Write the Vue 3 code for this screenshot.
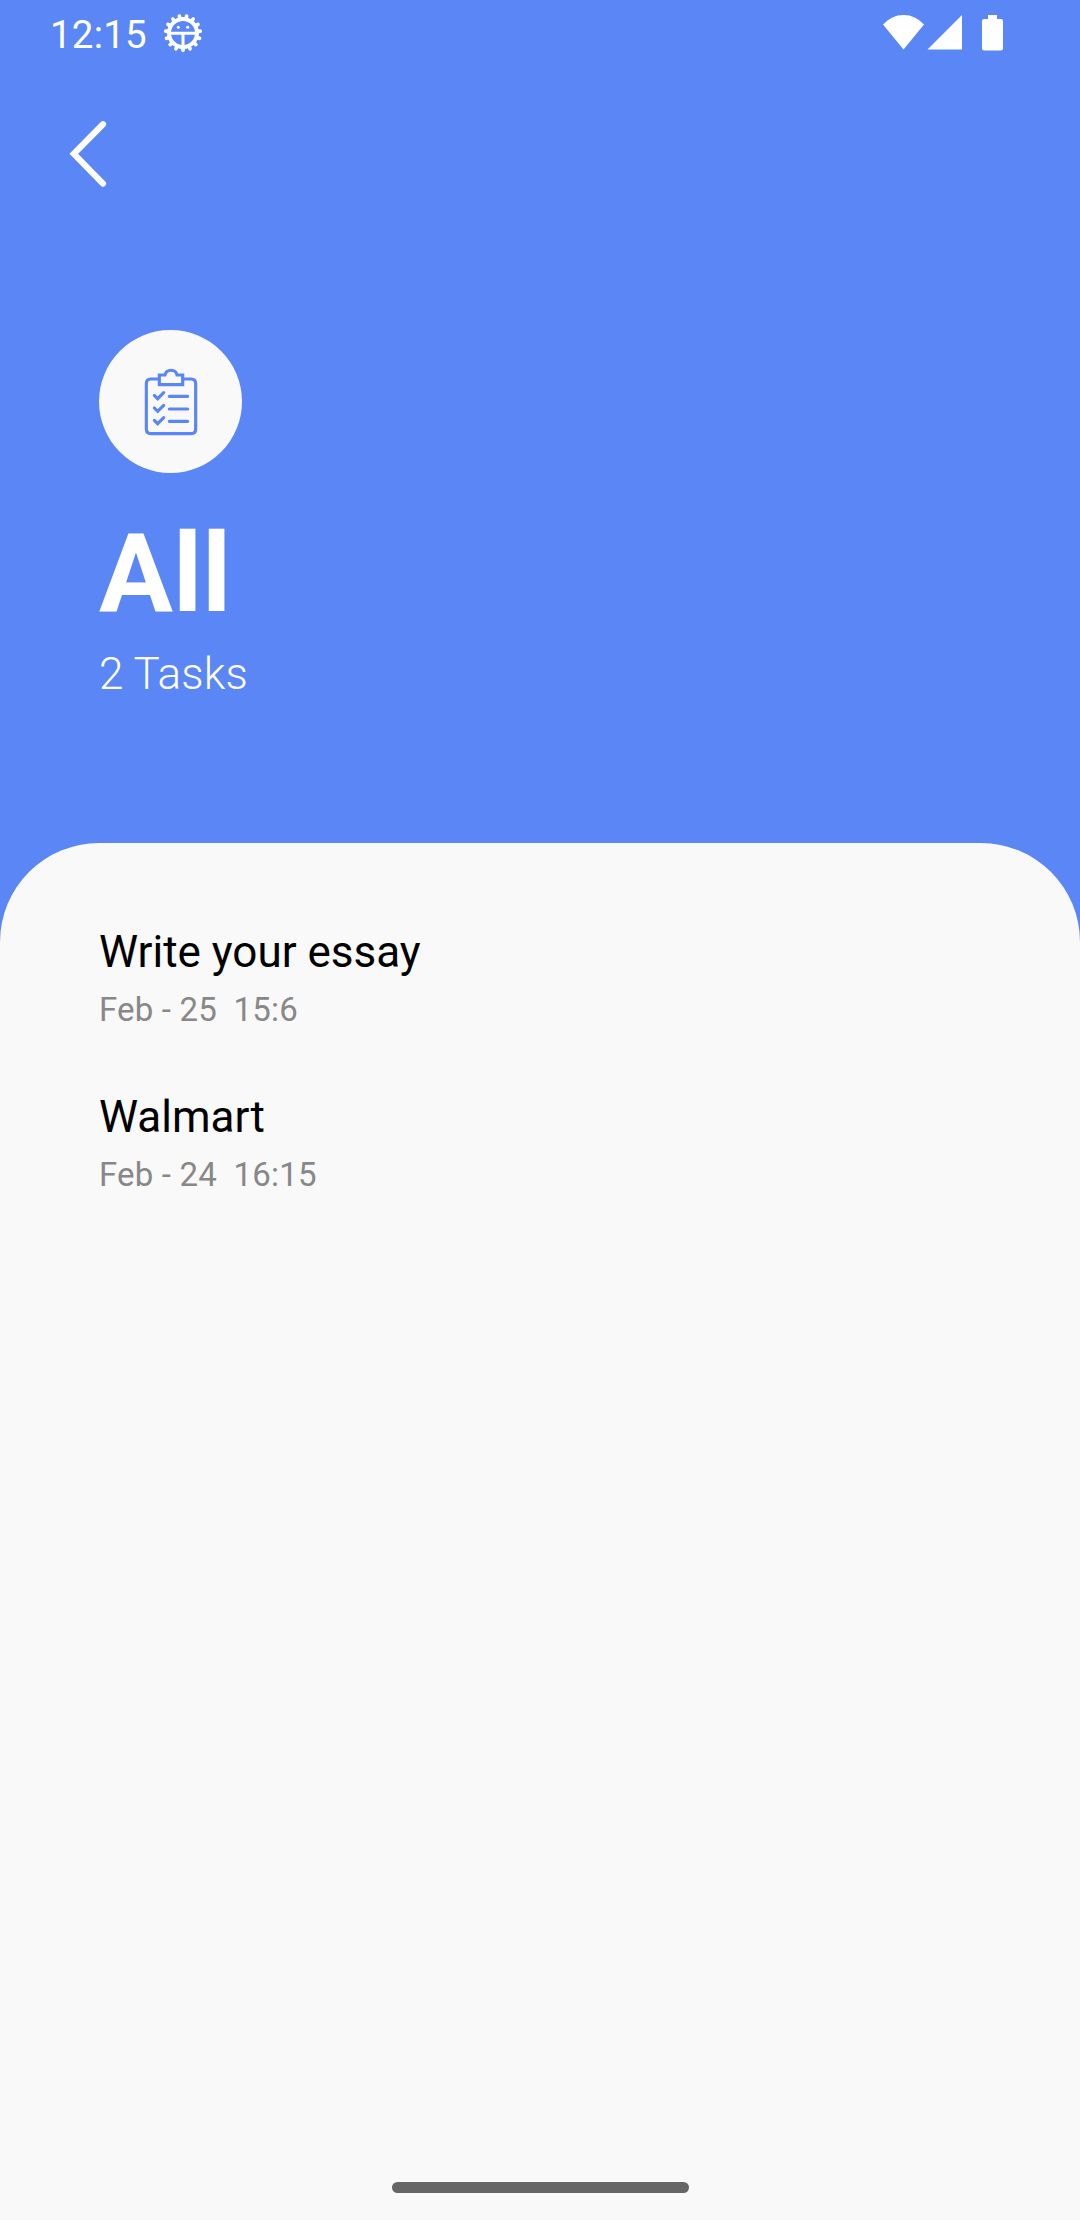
<script setup>
const tasks = [
  { title: 'Write your essay', due: 'Feb - 25  15:6' },
  { title: 'Walmart', due: 'Feb - 24  16:15' },
]

const teeth = Array.from({ length: 15 }, (_, i) => i * 24)
</script>

<template>
  <div class="screen">
    <div class="status">
      <span class="clock">12:15</span>
      <svg class="debug" viewBox="-60 -60 120 120" fill="none" stroke="#fff">
        <path
          v-for="angle in teeth"
          :key="angle"
          d="M0 44V52"
          stroke-width="11"
          stroke-linecap="round"
          :transform="`rotate(${angle})`"
        />
        <circle r="42" stroke-width="12" />
        <path d="M-38 1H38M0 1V40" stroke-width="9" />
        <g fill="#fff" stroke="none">
          <circle cx="-14" cy="-17" r="4.500" />
          <circle cx="14" cy="-17" r="4.500" />
        </g>
      </svg>
      <svg class="signals" viewBox="0 0 120 36" fill="#fff">
        <path d="M0 9.5Q8.500 0 20.500 0T41 9.500L20.500 34.500Z" />
        <path d="M44.500 34.500H79V0Z" />
        <path d="M105 0h9v4h4a2 2 0 0 1 2 2v27.500a2 2 0 0 1-2 2h-17a2 2 0 0 1-2-2V6a2 2 0 0 1 2-2h4Z" />
      </svg>
    </div>

    <header class="header">
      <svg class="back" viewBox="0 0 40 70" fill="none" stroke="#fff" stroke-width="6.200" stroke-linecap="round">
        <path d="M35 4.200L5.800 33.800L35 63.600" />
      </svg>
      <div class="badge">
        <svg viewBox="0 0 168 210" fill="none" stroke="#5b87f6" stroke-width="9.500">
          <path d="M45 36H24Q10 36 10 50V186Q10 200 24 200H144Q158 200 158 186V50Q158 36 144 36H123" />
          <path d="M49 24H66C70 5 98 5 102 24H119V53H49Z" />
          <path d="M34 85L44 95L62 77M34 123L44 133L62 115M34 160L44 170L62 152" stroke-linecap="round" />
          <path d="M79 88H134M79 126H134M79 163H134" stroke-linecap="round" />
        </svg>
      </div>
      <h1>All</h1>
      <p class="count">2 Tasks</p>
    </header>

    <main class="sheet">
      <div v-for="task in tasks" :key="task.title" class="task">
        <p class="title">{{ task.title }}</p>
        <p class="due">{{ task.due }}</p>
      </div>
      <div class="home"></div>
    </main>
  </div>
</template>

<style>
body {
  margin: 0;
}
</style>

<style scoped>
.screen {
  width: 1080px;
  height: 2220px;
  display: flex;
  flex-direction: column;
  background: #5b87f6;
  color: #fff;
  font-family: Roboto, sans-serif;
  overflow: hidden;
}
.status {
  height: 66px;
  box-sizing: border-box;
  padding: 0 77px 0 50px;
  display: flex;
  align-items: center;
}
.clock {
  font-size: 38.5px;
  line-height: 66px;
  letter-spacing: 0.2px;
  padding-top: 3px;
}
.debug {
  width: 40px;
  height: 40px;
  margin-left: 16px;
}
.signals {
  width: 120px;
  height: 36px;
  margin-left: auto;
}
.header {
  height: 777px;
}
.back {
  display: block;
  width: 40px;
  height: 70px;
  margin: 54px 0 0 68px;
}
.badge {
  width: 143px;
  height: 143px;
  margin: 140px 0 0 99px;
  display: flex;
  align-items: center;
  justify-content: center;
  border-radius: 50%;
  background: #f9f9f9;
}
.badge svg {
  width: 56px;
  height: 70px;
}
h1,
p {
  margin: 0;
  white-space: pre;
}
h1 {
  margin: 36px 0 0 99px;
  font-size: 110px;
  line-height: 130px;
  font-weight: 700;
}
.count {
  margin: 9px 0 0 99px;
  font-size: 44px;
  line-height: 52px;
  font-weight: 300;
  letter-spacing: 0.15px;
}
.sheet {
  flex: 1;
  display: flex;
  flex-direction: column;
  gap: 61px;
  padding: 83px 99px 27.500px;
  border-radius: 99px 99px 0 0;
  background: #f9f9f9;
}
.title {
  font-size: 44px;
  line-height: 52px;
  color: #000;
}
.due {
  margin-top: 12px;
  font-size: 33px;
  line-height: 40px;
  letter-spacing: 0.17px;
  color: #888;
}
.home {
  width: 297px;
  height: 11px;
  margin: auto auto 0;
  border-radius: 6px;
  background: #666;
}
</style>
